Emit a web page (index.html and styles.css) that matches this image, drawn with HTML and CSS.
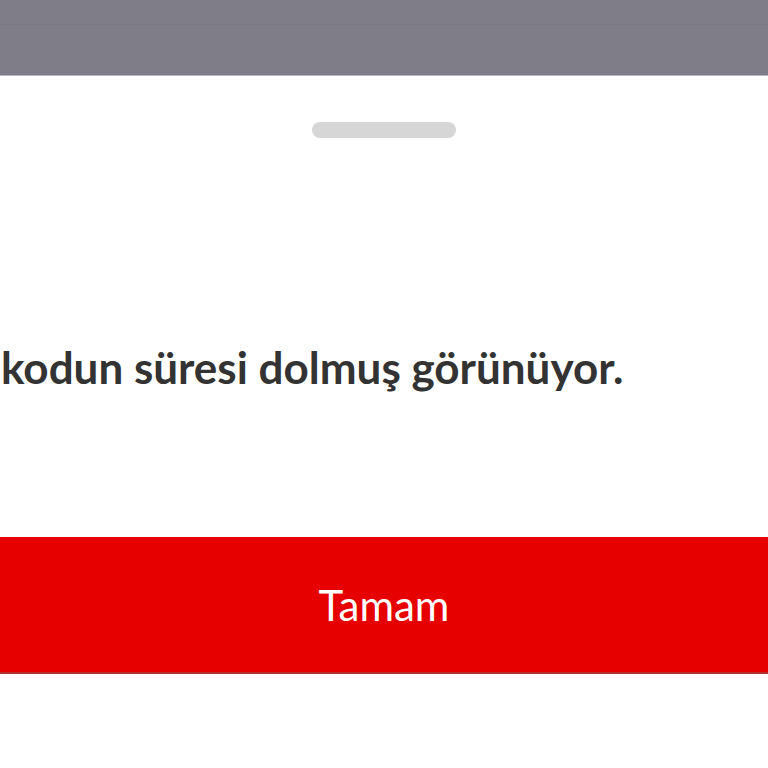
FILE: index.html
```html
<!DOCTYPE html>
<html lang="tr">
<head>
<meta charset="utf-8">
<link rel="stylesheet" href="styles.css">
</head>
<body>
<div class="overlay">
  <div class="overlay-top"></div>
</div>
<div class="sheet">
  <div class="handle"></div>
  <p class="message">kodun süresi dolmuş görünüyor.</p>
  <button class="btn">Tamam</button>
</div>
</body>
</html>
```
FILE: styles.css
```css
html, body {
  margin: 0;
  padding: 0;
  width: 768px;
  height: 768px;
  overflow: hidden;
  background: #ffffff;
  font-family: Lato, "Noto Sans", sans-serif;
}
.overlay {
  height: 76px;
  background: #7f7e88;
  border-bottom: 1px solid #b9b8bf;
  box-sizing: border-box;
}
.overlay-top {
  height: 24px;
  border-bottom: 1px solid #7b7a84;
}
.sheet {
  display: flex;
  flex-direction: column;
  align-items: stretch;
}
.handle {
  align-self: center;
  width: 144px;
  height: 16px;
  border-radius: 8px;
  background: #d6d6d6;
  margin-top: 46px;
}
.message {
  margin: 0;
  margin-top: 205px;
  padding-left: 1px;
  font-size: 44px;
  font-weight: 700;
  color: #333333;
  line-height: 48px;
  white-space: nowrap;
}
.btn {
  margin-top: 146px;
  height: 137px;
  border: none;
  border-bottom: 2px solid #b3302f;
  background: #e60000;
  color: #ffffff;
  font-family: Lato, "Noto Sans", sans-serif;
  font-size: 42px;
  font-weight: 400;
  padding: 0;
}
```
